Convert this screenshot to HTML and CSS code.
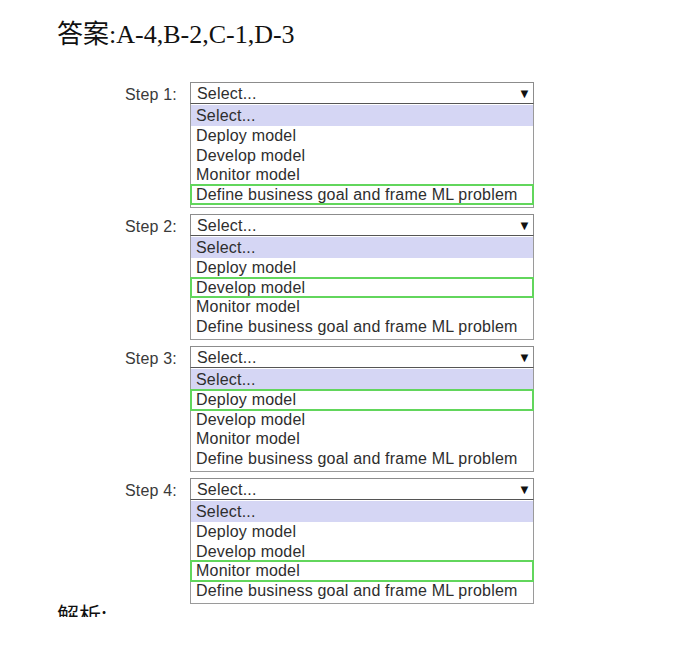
FILE: index.html
```html
<!DOCTYPE html>
<html lang="zh">
<head>
<meta charset="utf-8">
<title>答案</title>
<link rel="stylesheet" href="styles.css">
</head>
<body>
<div class="page">
  <h1 class="answer">答案:A-4,B-2,C-1,D-3</h1>
  <div class="steps">
    <div class="step">
      <div class="label">Step 1:</div>
      <div class="dropdown">
        <div class="select"><span>Select...</span><span class="arrow">▼</span></div>
        <div class="list">
          <div class="opt first">Select...</div>
          <div class="opt">Deploy model</div>
          <div class="opt">Develop model</div>
          <div class="opt">Monitor model</div>
          <div class="opt chosen">Define business goal and frame ML problem</div>
        </div>
      </div>
    </div>
    <div class="step">
      <div class="label">Step 2:</div>
      <div class="dropdown">
        <div class="select"><span>Select...</span><span class="arrow">▼</span></div>
        <div class="list">
          <div class="opt first">Select...</div>
          <div class="opt">Deploy model</div>
          <div class="opt chosen">Develop model</div>
          <div class="opt">Monitor model</div>
          <div class="opt">Define business goal and frame ML problem</div>
        </div>
      </div>
    </div>
    <div class="step">
      <div class="label">Step 3:</div>
      <div class="dropdown">
        <div class="select"><span>Select...</span><span class="arrow">▼</span></div>
        <div class="list">
          <div class="opt first">Select...</div>
          <div class="opt chosen">Deploy model</div>
          <div class="opt">Develop model</div>
          <div class="opt">Monitor model</div>
          <div class="opt">Define business goal and frame ML problem</div>
        </div>
      </div>
    </div>
    <div class="step">
      <div class="label">Step 4:</div>
      <div class="dropdown">
        <div class="select"><span>Select...</span><span class="arrow">▼</span></div>
        <div class="list">
          <div class="opt first">Select...</div>
          <div class="opt">Deploy model</div>
          <div class="opt">Develop model</div>
          <div class="opt chosen">Monitor model</div>
          <div class="opt">Define business goal and frame ML problem</div>
        </div>
      </div>
    </div>
  </div>
  <p class="analysis">解析:</p>
</div>
</body>
</html>
```

FILE: styles.css
```css
html, body {
  margin: 0;
  padding: 0;
  background: #ffffff;
}

.page {
  height: 617px;
  overflow: hidden;
  padding: 20px 0 0 57px;
  box-sizing: border-box;
}

.answer {
  margin: 0;
  font-family: "Liberation Serif", "Noto Sans CJK SC", serif;
  font-weight: normal;
  font-size: 26px;
  line-height: 30px;
  color: #111;
}

.steps {
  margin-top: 32px;
  display: flex;
  flex-direction: column;
  gap: 6px;
  font-family: "Liberation Sans", Arial, sans-serif;
  font-size: 16px;
  color: #2e2e2e;
  letter-spacing: 0.2px;
}

.step {
  display: grid;
  grid-template-columns: 120px 344px;
  column-gap: 13px;
  align-items: start;
}

.label {
  text-align: right;
  line-height: 22px;
  padding-top: 2px;
  color: #3a3a3a;
}

.dropdown {
  display: flex;
  flex-direction: column;
}

.select {
  height: 22px;
  box-sizing: border-box;
  border: 1px solid #8c8c8c;
  border-bottom-color: #555;
  display: flex;
  justify-content: space-between;
  align-items: center;
  padding: 2px 2px 0 6px;
  line-height: 20px;
}

.arrow {
  font-size: 13px;
  color: #111;
  line-height: 18px;
}

.list {
  border: 1px solid #9a9a9a;
  border-top: none;
  padding: 1px 0 3px;
}

.opt {
  height: 19.5px;
  line-height: 20px;
  padding-left: 5px;
  white-space: nowrap;
}

.opt.first {
  height: 21px;
  line-height: 22px;
  background: #d5d6f4;
}

.opt.chosen {
  outline: 2px solid #62d65c;
  outline-offset: -1px;
}

.analysis {
  margin: -6px 0 0;
  font-family: "Noto Sans CJK SC", serif;
  font-size: 22px;
  line-height: 30px;
  color: #111;
}
```
